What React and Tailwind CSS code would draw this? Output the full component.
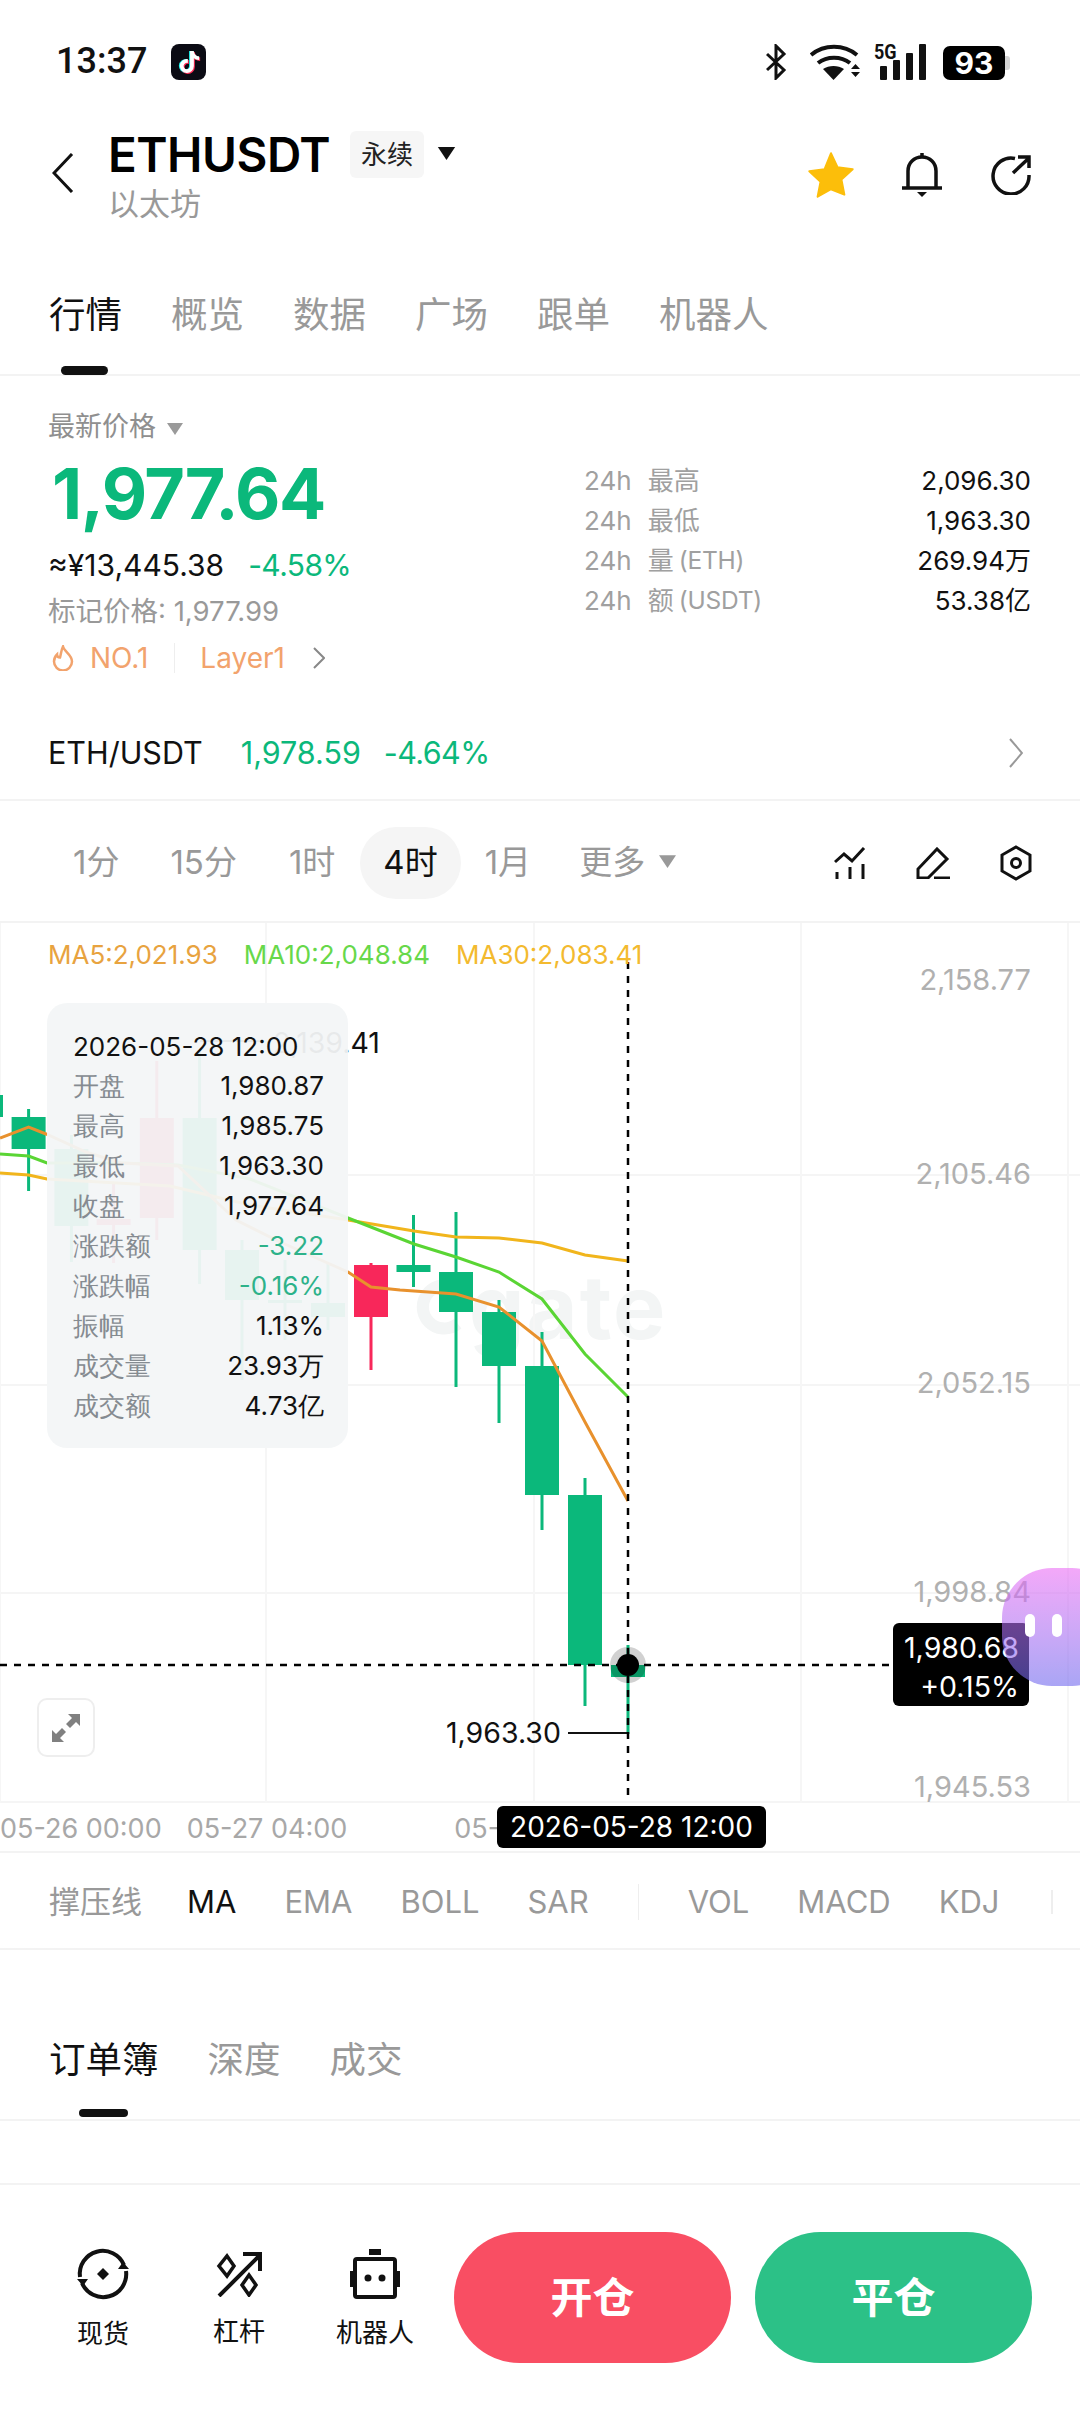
import { FaTiktok } from 'react-icons/fa6';

const GREEN = '#0bb87b';
const RED = '#f8275a';

// center x, body top, body bottom, wick top, wick bottom
const candles = [
  [-14, 1095, 1117, 1080, 1135, GREEN],
  [28.6, 1117, 1149, 1109, 1191, GREEN],
  [71.4, 1149, 1226, 1135, 1262, GREEN],
  [113.6, 1219, 1225, 1182, 1263, RED],
  [156.8, 1118, 1218, 1061, 1240, RED],
  [199.6, 1118, 1250, 1052, 1284, GREEN],
  [242, 1250, 1300, 1240, 1380, GREEN],
  [285, 1300, 1303, 1260, 1340, GREEN],
  [328, 1303, 1317, 1263, 1330, GREEN],
  [371, 1265, 1317, 1263, 1370, RED],
  [413.5, 1265, 1272, 1215, 1287, GREEN],
  [456, 1272, 1312, 1212, 1387, GREEN],
  [499, 1312, 1366, 1300, 1423, GREEN],
  [542, 1366, 1495, 1332, 1530, GREEN],
  [585, 1495, 1665, 1478, 1706, GREEN],
  [628, 1665, 1677, 1645, 1734, GREEN],
];

const ma5 = '0,1138 28.6,1127 46,1134 86,1152 121,1163 178,1166 236,1220 278,1241 348,1272 371,1287 400,1290 456,1294 499,1307 542,1341 585,1422 628,1501';
const ma10 = '0,1154 28.6,1156 47,1163 121,1163 178,1165 250,1179 348,1218 414,1244 456,1257 499,1272 542,1299 585,1354 628,1397';
const ma30 = '0,1173 28.6,1175 47,1179 170,1186 250,1205 348,1220 414,1231 456,1237 499,1238 542,1243 585,1255 628,1261';

const tooltipRows = [
  ['开盘', '1,980.87'],
  ['最高', '1,985.75'],
  ['最低', '1,963.30'],
  ['收盘', '1,977.64'],
  ['涨跌额', '-3.22', true],
  ['涨跌幅', '-0.16%', true],
  ['振幅', '1.13%'],
  ['成交量', '23.93万'],
  ['成交额', '4.73亿'],
];

const stats = [
  ['最高', '', '2,096.30'],
  ['最低', '', '1,963.30'],
  ['量', '(ETH)', '269.94万'],
  ['额', '(USDT)', '53.38亿'],
];

const Caret = ({ className }) => (
  <svg viewBox="0 0 16 12" className={className}>
    <path d="M0 0h16l-8 12z" fill="currentColor" />
  </svg>
);

const StatusBar = () => (
  <div className="h-[100px] flex items-start pt-[44px] pl-[56px] pr-[70px]">
    <span className="text-[36px] leading-[36px] font-medium text-[#111] font-['Roboto'] mt-[-1px]">13:37</span>
    <div className="relative ml-[24px] w-[35px] h-[36px] bg-[#0b0b14] rounded-[8px]">
      <FaTiktok className="absolute left-[7px] top-[7px] w-[21px] h-[22px] text-[#25f4ee]" />
      <FaTiktok className="absolute left-[9px] top-[8px] w-[21px] h-[22px] text-[#fe2c55]" />
      <FaTiktok className="absolute left-[8px] top-[7px] w-[21px] h-[22px] text-white" />
    </div>
    <div className="ml-auto flex items-start">
      <svg viewBox="0 0 21 36" className="w-[21px] h-[36px]" fill="none" stroke="#111" strokeWidth="3">
        <path d="M1 10l17 16-8 8V2l8 8L1 26" />
      </svg>
      <svg viewBox="0 0 52 36" className="ml-[23px] w-[52px] h-[36px]" fill="none" stroke="#111" strokeWidth="4">
        <path d="M1 11c13-11 33-11 46 0" />
        <path d="M8 19c9-7 23-7 32 0" />
        <path d="M13 25c6-4 15-4 21 0l-10.500 11z" fill="#111" strokeWidth="0" />
        <path d="M41 25h9l-4.500-5zM41 28h9l-4.500 5z" fill="#111" strokeWidth="0" />
      </svg>
      <div className="relative ml-[14px] w-[50px] h-[36px]">
        <span className="absolute left-[-2px] top-[-2px] text-[20px] leading-[20px] font-bold text-[#111] font-['Roboto'] scale-x-[.9] origin-left">5G</span>
        <div className="absolute inset-0 flex items-end justify-end gap-[6px]">
          <div className="w-[7px] h-[14px] bg-[#111] rounded-[1px]" />
          <div className="w-[7px] h-[20px] bg-[#111] rounded-[1px]" />
          <div className="w-[7px] h-[27px] bg-[#111] rounded-[1px]" />
          <div className="w-[7px] h-[36px] bg-[#111] rounded-[1px]" />
        </div>
      </div>
      <div className="ml-[17px] flex items-center">
        <div className="w-[62px] h-[34px] mt-[2px] bg-black rounded-[7px] flex items-center justify-center text-white text-[30px] leading-none font-bold font-['Inter']">93</div>
        <div className="w-[5px] h-[14px] mt-[2px] bg-[#d4d4d4] rounded-r-[3px]" />
      </div>
    </div>
  </div>
);

const Header = () => (
  <div className="h-[140px] relative flex items-start">
    <svg viewBox="0 0 22 40" className="ml-[52px] mt-[53px] w-[22px] h-[40px]" fill="none" stroke="#111" strokeWidth="3">
      <path d="M20 1L2 20l18 19" />
    </svg>
    <div className="ml-[34px] mt-[31px]">
      <div className="flex items-center h-[47px]">
        <span className="text-[47.5px] leading-[47px] font-semibold text-black tracking-[-0.5px]">ETHUSDT</span>
        <span className="ml-[20px] w-[74px] h-[47px] bg-[#f6f6f6] rounded-[6px] flex items-center justify-center text-[26px] text-[#222]">永续</span>
        <Caret className="ml-[13px] mt-[-2px] w-[19px] h-[13px] text-[#111]" />
      </div>
      <div className="mt-[8px] text-[31px] leading-[36px] text-[#999]">以太坊</div>
    </div>
    <div className="ml-auto mr-[49px] mt-[50px] flex items-center">
      <svg viewBox="0 0 24 24" className="w-[50px] h-[50px]">
        <path d="M12 1.600l3.100 6.700 7.300.9-5.400 5 1.400 7.200L12 18.800l-6.400 3.600L7 15.200l-5.400-5 7.300-.9z" fill="#fcbe0a" stroke="#fcbe0a" strokeWidth="1" strokeLinejoin="round" />
      </svg>
      <svg viewBox="0 0 42 46" className="ml-[45px] w-[42px] h-[46px]" fill="none" stroke="#111" strokeWidth="3.500">
        <path d="M7 36V19c0-8 6-14 14-14s14 6 14 14v17" />
        <path d="M1 36h40" />
        <path d="M21 1v4" />
        <path d="M16 40h10l-5 5z" fill="#111" strokeWidth="0" />
      </svg>
      <svg viewBox="0 0 40 40" className="ml-[48px] w-[40px] h-[40px]" fill="none" stroke="#111" strokeWidth="3.500">
        <path d="M24 3.500A18 18 0 1 0 38 20" />
        <path d="M22 18L38 3M27 2h11v11" />
      </svg>
    </div>
  </div>
);

const Tabs = ({ items, gap }) => (
  <div className={`flex items-center ${gap} pl-[49px] text-[36.5px] leading-[40px] text-[#999]`}>
    {items.map((t, i) => (
      <span key={t} className={i === 0 ? 'text-[#111]' : ''}>{t}</span>
    ))}
  </div>
);

const PriceSection = () => (
  <div className="h-[325px] flex justify-between pl-[48px] pr-[49px]">
    <div className="pt-[36px]">
      <div className="h-[30px] flex items-center text-[27px] text-[#8f8f8f]">
        最新价格
        <Caret className="ml-[11px] mt-[3px] w-[16px] h-[12px] text-[#9a9a9a]" />
      </div>
      <div className="mt-[13px] ml-[4px] h-[76px] flex items-center text-[70px] font-bold tracking-[-1.5px] text-[#0bb87b]">1,977.64</div>
      <div className="mt-[14px] h-[40px] flex items-center text-[30px] text-[#111]">
        ≈¥13,445.38
        <span className="ml-[24px] tracking-[-0.6px] text-[#0bb87b]">-4.58%</span>
      </div>
      <div className="mt-[9px] h-[36px] flex items-center text-[27.5px] text-[#999]">标记价格: 1,977.99</div>
      <div className="mt-[10px] h-[36px] flex items-center text-[28px] text-[#f2a36d]">
        <svg viewBox="0 0 22 26" className="ml-[4px] w-[22px] h-[26px]" fill="none" stroke="#f2a36d" strokeWidth="2.500">
          <path d="M11 1.500c1 5 9 8 9 15a9 9 0 0 1-18 0c0-3 1-5 3-7 0 2 1 3 3 3 1-3 1-7 3-11z" />
        </svg>
        <span className="ml-[16px]">NO.1</span>
        <div className="ml-[26px] w-[1px] h-[30px] bg-[#eeeeee]" />
        <span className="ml-[25px]">Layer1</span>
        <svg viewBox="0 0 12 22" className="ml-[28px] w-[12px] h-[22px]" fill="none" stroke="#888" strokeWidth="2">
          <path d="M1 1l10 10L1 21" />
        </svg>
      </div>
    </div>
    <div className="w-[447px] pt-[84px] text-[26px]">
      {stats.map(([label, unit, value]) => (
        <div key={label} className="h-[40px] flex items-center justify-between">
          <span className="flex items-center text-[#a0a0a0]">
            <span className="mr-[16px]">24h</span>
            {label}
            {unit && <span className="ml-[5px] text-[24.5px] tracking-[-0.2px]">{unit}</span>}
          </span>
          <span className="text-[#111]">{value}</span>
        </div>
      ))}
    </div>
  </div>
);

const SpotRow = () => (
  <div className="h-[100px] pt-[5px] border-b-2 border-[#f3f3f3] flex items-center pl-[48px] pr-[57px] text-[30.5px]">
    <span className="text-[#111]">ETH/USDT</span>
    <span className="ml-[38px] text-[#0bb87b]">1,978.59</span>
    <span className="ml-[23px] tracking-[-0.6px] text-[#0bb87b]">-4.64%</span>
    <svg viewBox="0 0 14 30" className="ml-auto w-[14px] h-[30px]" fill="none" stroke="#999" strokeWidth="2">
      <path d="M1 1l12 14L1 29" />
    </svg>
  </div>
);

const Timeframes = () => (
  <div className="h-[122px] pt-[4px] border-b-2 border-[#f3f3f3] flex items-center pl-[48px] pr-[48px] text-[33px] text-[#999]">
    <span className="px-[25px]">1分</span>
    <span className="px-[26px]">15分</span>
    <span className="pl-[26px] pr-[25px]">1时</span>
    <span className="px-[23px] h-[72px] flex items-center bg-[#f5f5f5] rounded-[36px] text-[#111]">4时</span>
    <span className="px-[24px]">1月</span>
    <span className="ml-[24px]">更多</span>
    <Caret className="ml-[14px] mt-[-4px] w-[17px] h-[13px] text-[#999]" />
    <div className="ml-auto flex items-center gap-[50px]">
      <svg viewBox="0 0 32 32" className="w-[32px] h-[32px]" fill="none" stroke="#111" strokeWidth="3">
        <path d="M1 15l9-8 8 7L30 1" />
        <path d="M3 32v-7M16 32V20M29 32V17" />
      </svg>
      <svg viewBox="0 0 34 32" className="w-[34px] h-[32px]" fill="none" stroke="#111" strokeWidth="3">
        <path d="M2 31v-9L21 2l10 10-19 19z" />
        <path d="M18 31h16" />
      </svg>
      <svg viewBox="0 0 32 36" className="w-[32px] h-[36px]" fill="none" stroke="#111" strokeWidth="3">
        <path d="M16 2l14 8v16l-14 8-14-8V10z" />
        <circle cx="16" cy="18" r="4.500" />
      </svg>
    </div>
  </div>
);

const Chart = () => (
  <div className="relative h-[880px] overflow-hidden text-[28.5px] font-['Inter']">
    {/* watermark sits under the candles */}
    <div className="absolute left-[411px] top-[352px] flex items-center text-[88px] leading-[64px] tracking-[2px] font-bold text-[#f3f5f5]">
      <svg viewBox="0 0 60 60" className="w-[56px] h-[56px] mr-[2px]" fill="none" stroke="#f3f5f5" strokeWidth="13">
        <path d="M50 12a23 23 0 1 0 0 36" />
      </svg>
      gate
    </div>
    <svg viewBox="0 923 1080 880" className="absolute inset-0 w-[1080px] h-[880px]">
      {[1175, 1385, 1593, 1802].map((y) => (
        <line key={y} x1="0" x2="1080" y1={y} y2={y} stroke="#f5f5f5" strokeWidth="2" />
      ))}
      {[0, 266, 534, 801, 1068].map((x) => (
        <line key={x} x1={x} x2={x} y1="923" y2="1803" stroke="#f6f6f6" strokeWidth="2" />
      ))}
      <line x1="200" x2="262" y1="1041" y2="1041" stroke="#111" strokeWidth="2" />
      {candles.map(([x, t, b, wt, wb, color]) => (
        <g key={x} fill={color}>
          <rect x={x - 1.500} y={wt} width="3" height={wb - wt} />
          <rect x={x - 17} y={t} width="34" height={b - t} />
        </g>
      ))}
      <polyline points={ma30} fill="none" stroke="#f1b51c" strokeWidth="3" />
      <polyline points={ma10} fill="none" stroke="#5ad534" strokeWidth="3" />
      <polyline points={ma5} fill="none" stroke="#e8912d" strokeWidth="3" />
      <line x1="568" x2="628" y1="1733" y2="1733" stroke="#111" strokeWidth="2" />
      <line x1="628" x2="628" y1="962" y2="1800" stroke="#000" strokeWidth="2.500" strokeDasharray="7 7" />
      <line x1="0" x2="892" y1="1665" y2="1665" stroke="#000" strokeWidth="2.500" strokeDasharray="7 7" />
      <circle cx="628" cy="1665" r="18" fill="#000" fillOpacity="0.18" />
      <circle cx="628" cy="1665" r="11" fill="#000" />
    </svg>

    <div className="absolute left-[48px] top-[17px] flex gap-[26px] text-[26px] leading-[30px]">
      <span className="text-[#e8a33f]">MA5:2,021.93</span>
      <span className="text-[#67d84a]">MA10:2,048.84</span>
      <span className="text-[#f3ba2f]">MA30:2,083.41</span>
    </div>

    <span className="absolute left-[273px] top-[103px] text-[#111] leading-[34px]">2,139.41</span>

    <div className="absolute left-[47px] top-[80px] w-[301px] h-[445px] bg-[#f3f5f7]/95 rounded-[20px] pl-[26px] pr-[24px] pt-[25px] text-[26px]">
      <div className="h-[37px] flex items-center text-[#111]">2026-05-28 12:00</div>
      {tooltipRows.map(([label, value, down]) => (
        <div key={label} className="h-[40px] flex items-center justify-between">
          <span className="text-[26px] text-[#858b91]">{label}</span>
          <span className={down ? 'text-[#2db28a]' : 'text-[#111]'}>{value}</span>
        </div>
      ))}
    </div>

    {[
      ['2,158.77', 57],
      ['2,105.46', 251],
      ['2,052.15', 460],
      ['1,998.84', 669],
      ['1,945.53', 864],
    ].map(([label, top]) => (
      <span key={label} className="absolute right-[49px] text-[29px] text-[#b0b0b0] leading-[30px]" style={{ top: top - 15 }}>{label}</span>
    ))}

    <span className="absolute left-[446px] top-[793px] text-[#111] leading-[34px]">1,963.30</span>

    <div className="absolute left-[893px] top-[700px] w-[136px] h-[83px] bg-black rounded-[6px] pr-[10px] pt-[5px] text-right text-white leading-[39px]">
      <div>1,980.68</div>
      <div>+0.15%</div>
    </div>

    <div className="absolute left-[37px] top-[775px] w-[58px] h-[59px] bg-white border-2 border-[#eeeeee] rounded-[10px] flex items-center justify-center">
      <svg viewBox="0 0 28 28" className="w-[28px] h-[28px]" fill="#808080">
        <path d="M16 0h12v12l-4-4-6 6-4-4 6-6zM12 28H0V16l4 4 6-6 4 4-6 6z" />
      </svg>
    </div>

    <div className="absolute left-[1002px] top-[645px] w-[120px] h-[118px] rounded-[50px] bg-linear-to-b from-[rgba(235,110,245,0.6)] to-[rgba(112,105,238,0.6)]">
      <div className="absolute left-[23px] top-[46px] w-[10px] h-[23px] rounded-full bg-white" />
      <div className="absolute left-[50px] top-[46px] w-[10px] h-[23px] rounded-full bg-white" />
    </div>
  </div>
);

const TimeAxis = () => (
  <div className="relative h-[50px] pt-[5px] border-b-2 border-[#f3f3f3] flex items-center text-[27px] text-[#a8a8a8] font-['Inter']">
    <span>05-26 00:00</span>
    <span className="ml-[25px]">05-27 04:00</span>
    <span className="ml-[107px]">05-</span>
    <div className="absolute left-[497px] top-[3px] w-[269px] h-[42px] bg-black rounded-[6px] flex items-center justify-center text-[28px] text-white">2026-05-28 12:00</div>
  </div>
);

const Indicators = () => (
  <div className="h-[97px] pt-[3px] border-b-2 border-[#f3f3f3] flex items-center gap-[48px] pl-[49px] text-[31px] text-[#999]">
    <span className="mr-[-3px]">撑压线</span>
    <span className="text-[#111]">MA</span>
    <span>EMA</span>
    <span>BOLL</span>
    <span>SAR</span>
    <div className="mx-[1px] w-[1px] h-[36px] bg-[#eeeeee]" />
    <span>VOL</span>
    <span>MACD</span>
    <span>KDJ</span>
    <div className="ml-[3px] w-[2px] h-[24px] bg-[#eeeeee]" />
  </div>
);

const BottomBar = () => (
  <div className="flex-1 flex items-start pt-[47px]">
    <div className="w-[76px] ml-[65px] flex flex-col items-center">
      <svg viewBox="0 0 54 54" className="mt-[15px] w-[54px] h-[54px]" fill="none" stroke="#111" strokeWidth="4">
        <path d="M4 30A23 23 0 0 1 48 18" />
        <path d="M50 24A23 23 0 0 1 6 36" />
        <path d="M42 22h11l-6-7zM12 32H1l6 7z" fill="#111" strokeWidth="0" />
        <path d="M27 21l6 6-6 6-6-6z" fill="#111" strokeWidth="0" />
      </svg>
      <span className="mt-[18px] text-[26px] leading-[30px] text-[#111]">现货</span>
    </div>
    <div className="w-[76px] ml-[60px] flex flex-col items-center">
      <svg viewBox="0 0 46 46" className="mt-[19px] w-[46px] h-[46px]" fill="none" stroke="#111" strokeWidth="4">
        <path d="M3 45L43 5M27 3h17v17" />
        <path d="M11 5l7 10-7 10-8-10zM33 24l7 10-7 10-7-10z" strokeWidth="3.500" />
      </svg>
      <span className="mt-[20px] text-[26px] leading-[30px] text-[#111]">杠杆</span>
    </div>
    <div className="w-[80px] ml-[58px] flex flex-col items-center">
      <svg viewBox="0 0 50 50" className="mt-[17px] w-[50px] h-[50px]" fill="none" stroke="#111" strokeWidth="4">
        <path d="M19 0h12v6H19z" fill="#111" strokeWidth="0" />
        <rect x="5" y="10" width="40" height="38" rx="2" />
        <path d="M1 22v16M49 22v16" />
        <circle cx="18" cy="29" r="3.500" fill="#111" strokeWidth="0" />
        <circle cx="32" cy="29" r="3.500" fill="#111" strokeWidth="0" />
      </svg>
      <span className="mt-[19px] text-[26px] leading-[30px] text-[#111]">机器人</span>
    </div>
    <button className="ml-[39px] w-[277px] h-[131px] rounded-[66px] bg-[#f94e63] text-white text-[42px] font-bold">开仓</button>
    <button className="ml-[24px] w-[277px] h-[131px] rounded-[66px] bg-[#2cc187] text-white text-[42px] font-bold">平仓</button>
  </div>
);

export default function App() {
  return (
    <div className="w-[1080px] h-[2412px] bg-white overflow-hidden flex flex-col [font-family:Inter,'Noto_Sans_CJK_SC',sans-serif]">
      <StatusBar />
      <Header />
      <div className="h-[136px] border-b-2 border-[#f3f3f3] relative pt-[55px]">
        <Tabs items={['行情', '概览', '数据', '广场', '跟单', '机器人']} gap="gap-[49px]" />
        <div className="absolute left-[61px] bottom-[-1px] w-[47px] h-[9px] rounded-full bg-[#111]" />
      </div>
      <PriceSection />
      <SpotRow />
      <Timeframes />
      <Chart />
      <TimeAxis />
      <Indicators />
      <div className="h-[171px] border-b-2 border-[#f3f3f3] relative pt-[90px]">
        <Tabs items={['订单簿', '深度', '成交']} gap="gap-[49px]" />
        <div className="absolute left-[79px] bottom-[2px] w-[49px] h-[8px] rounded-full bg-[#111]" />
      </div>
      <div className="h-[64px] border-b-2 border-[#f3f3f3]" />
      <BottomBar />
    </div>
  );
}
